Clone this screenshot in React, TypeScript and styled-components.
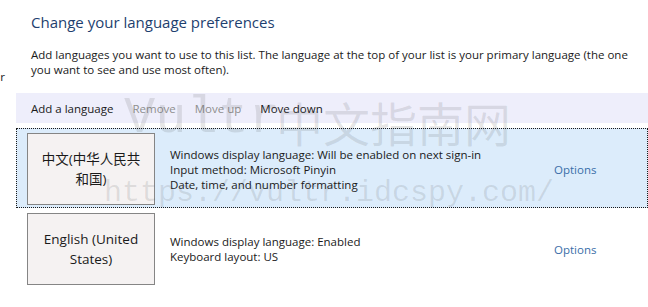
import React from "react";
import styled, { createGlobalStyle } from "styled-components";

const Global = createGlobalStyle`
  html, body { margin: 0; padding: 0; background: #ffffff; }
  body { font-family: "Open Sans", "Noto Sans", "Noto Sans CJK SC", sans-serif; color: #1a1a1a; }
`;

const Page = styled.div`
  position: relative;
  width: 648px;
  height: 307px;
  overflow: hidden;
  display: grid;
  grid-template-columns: 16px 1fr;
`;

const SideNav = styled.div`
  font-size: 11.5px;
  line-height: 15px;
  padding-top: 69px;
  overflow: hidden;
  text-align: right;
  padding-right: 11px;
  white-space: nowrap;
`;

const Main = styled.div`
  display: flex;
  flex-direction: column;
`;

const Title = styled.h1`
  margin: 0;
  padding: 10px 0 0 15px;
  font-size: 15px;
  line-height: 24px;
  font-weight: 400;
  color: #1e3f6f;
`;

const Intro = styled.p`
  margin: 0;
  padding: 13px 0 0 15px;
  font-size: 11.5px;
  line-height: 15px;
  width: 600px;
`;

const Toolbar = styled.div`
  margin-top: 16px;
  height: 30px;
  background: #eeeefb;
  display: flex;
  align-items: center;
  gap: 19px;
  padding-left: 15px;
  font-size: 11.5px;
`;

const ToolItem = styled.span<{ $disabled?: boolean }>`
  color: ${(p) => (p.$disabled ? "#8e8e8e" : "#1a1a1a")};
`;

const List = styled.div`
  margin-top: 5px;
  display: flex;
  flex-direction: column;
`;

const Row = styled.div<{ $selected?: boolean }>`
  height: 80px;
  box-sizing: border-box;
  border: 1px ${(p) => (p.$selected ? "dotted #1a1a1a" : "solid transparent")};
  background: ${(p) => (p.$selected ? "#dcecfb" : "transparent")};
  padding: 4px 0 2px 10px;
  display: flex;
  align-items: flex-start;
`;

const LangBox = styled.div`
  width: 128px;
  height: 72px;
  box-sizing: border-box;
  border: 1px solid #858585;
  background: #f5f2f2;
  display: flex;
  align-items: center;
  justify-content: center;
  text-align: center;
  font-size: 13.5px;
  line-height: 20px;
  padding: 0 9px;
  color: #1a1a1a;
`;

const Details = styled.div`
  margin-left: 15px;
  width: 384px;
  height: 72px;
  display: flex;
  flex-direction: column;
  justify-content: center;
  font-size: 11.5px;
  line-height: 15px;
`;

const OptionsLink = styled.a`
  height: 72px;
  display: flex;
  align-items: center;
  font-size: 11.5px;
  color: #3a6ea8;
  text-decoration: none;
`;

const Watermark = styled.div<{ $top: number; $left: number }>`
  position: absolute;
  top: ${(p) => p.$top}px;
  left: ${(p) => p.$left}px;
  line-height: 1;
  color: rgba(60, 60, 60, 0.13);
  white-space: nowrap;
  pointer-events: none;
  display: flex;
  align-items: flex-end;
`;

const MarkLatin = styled.span<{ $size: number }>`
  font-family: "Liberation Mono", monospace;
  font-size: ${(p) => p.$size}px;
`;

const MarkCjk = styled.span`
  font-family: "Noto Sans CJK SC", sans-serif;
  font-size: 47px;
  margin-left: -4px;
`;

const languages = [
  {
    name: "中文(中华人民共和国)",
    details: [
      "Windows display language: Will be enabled on next sign-in",
      "Input method: Microsoft Pinyin",
      "Date, time, and number formatting",
    ],
    selected: true,
  },
  {
    name: "English (United States)",
    details: ["Windows display language: Enabled", "Keyboard layout: US"],
    selected: false,
  },
];

export default function App() {
  return (
    <>
      <Global />
      <Page>
        <SideNav>r</SideNav>
        <Main>
          <Title>Change your language preferences</Title>
          <Intro>
            Add languages you want to use to this list. The language at the top of your list is your primary
            language (the one you want to see and use most often).
          </Intro>
          <Toolbar>
            <ToolItem>Add a language</ToolItem>
            <ToolItem $disabled>Remove</ToolItem>
            <ToolItem $disabled>Move up</ToolItem>
            <ToolItem>Move down</ToolItem>
          </Toolbar>
          <List>
            {languages.map((l) => (
              <Row key={l.name} $selected={l.selected}>
                <LangBox>{l.name}</LangBox>
                <Details>
                  {l.details.map((d) => (
                    <div key={d}>{d}</div>
                  ))}
                </Details>
                <OptionsLink href="#">Options</OptionsLink>
              </Row>
            ))}
          </List>
        </Main>
        <Watermark $top={93} $left={124}>
          <MarkLatin $size={52}>Vultr</MarkLatin>
          <MarkCjk>中文指南网</MarkCjk>
        </Watermark>
        <Watermark $top={178} $left={104}>
          <MarkLatin $size={30}>https://vultr.idcspy.com/</MarkLatin>
        </Watermark>
      </Page>
    </>
  );
}
